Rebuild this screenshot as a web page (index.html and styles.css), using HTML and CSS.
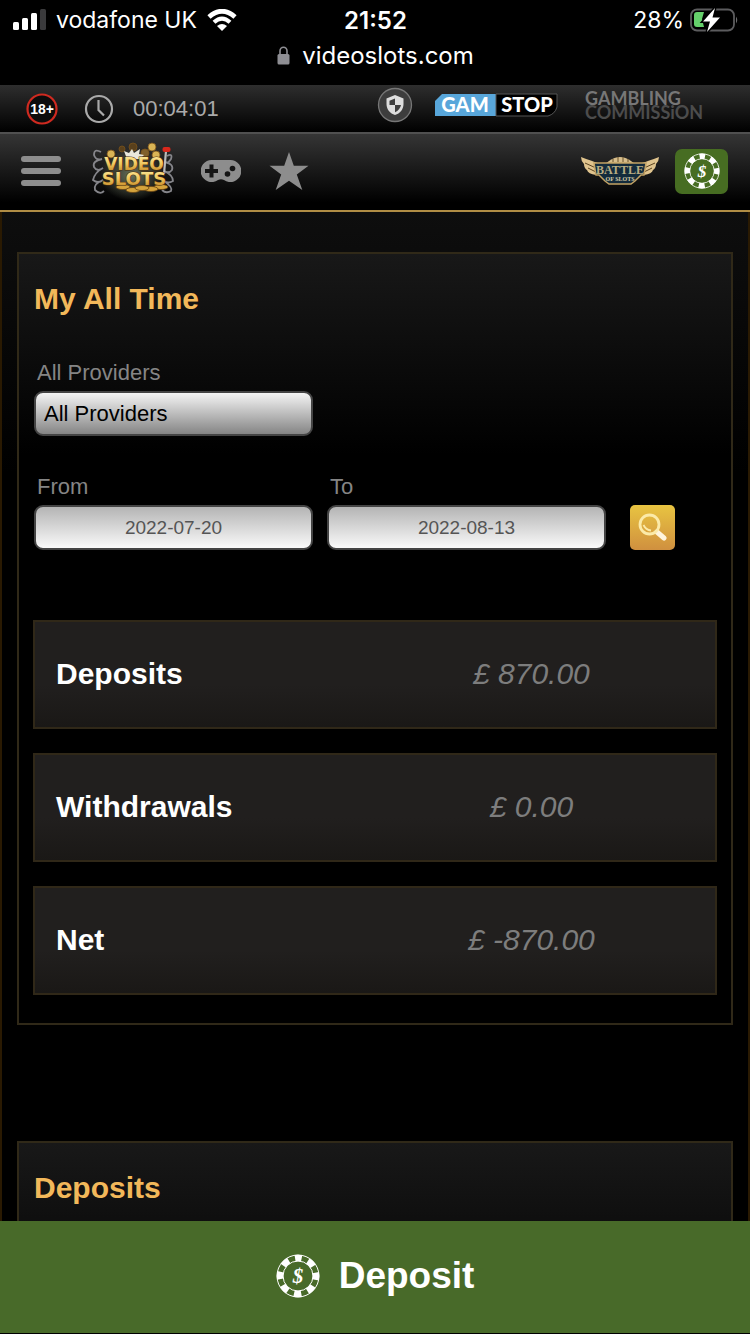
FILE: index.html
```html
<!DOCTYPE html>
<html lang="en">
<head>
	<meta charset="utf-8"/>
	<title>My All Time - videoslots.com</title>
	<meta name="viewport" content="width=device-width,initial-scale=1.0">
	<link rel="stylesheet" href="styles.css">
</head>

<body>
	<!-- shared poker chip -->
	<svg class="defs" aria-hidden="true">
		<symbol id="chip" viewBox="0 0 44 44">
			<circle cx="22" cy="22" r="21" fill="none" stroke="#fff" stroke-width="1"/>
			<circle cx="22" cy="22" r="18" fill="none" stroke="#fff" stroke-width="6.5" stroke-dasharray="7.5 6.637" stroke-dashoffset="3.75" transform="rotate(-90 22 22)"/>
			<circle cx="22" cy="22" r="15" fill="none" stroke="#fff" stroke-width="1"/>
			<text x="22" y="29" text-anchor="middle" class="chip-sign">$</text>
		</symbol>
	</svg>

	<div class="device">
		<div class="status">
			<div class="status-left">
				<svg width="33" height="22" viewBox="0 0 33 22">
					<rect x="0" y="13" width="6" height="8" rx="1.5" fill="#fff"/>
					<rect x="9" y="9" width="6" height="12" rx="1.5" fill="#fff"/>
					<rect x="18" y="4" width="6" height="17" rx="1.5" fill="#fff"/>
					<rect x="27" y="0" width="6" height="21" rx="1.5" fill="#3a3a3c"/>
				</svg>
				<span>vodafone UK</span>
				<svg width="30" height="22" viewBox="0 0 30 22">
					<path d="M2 8 Q15 -3.500 28 8" fill="none" stroke="#fff" stroke-width="4.800"/>
					<path d="M7 13.200 Q15 6 23 13.200" fill="none" stroke="#fff" stroke-width="4.200"/>
					<path d="M10 17 Q15 13 20 17 L15 22Z" fill="#fff"/>
				</svg>
			</div>
			<b class="status-time">21:52</b>
			<div class="status-right">
				<span>28%</span>
				<svg width="48" height="24" viewBox="0 0 48 24">
					<rect x="1" y="1.500" width="43" height="21" rx="6" fill="none" stroke="#5c5c5e" stroke-width="1.800"/>
					<path d="M46 8.500 q2.500 3.500 0 7z" fill="#6c6c6e"/>
					<path d="M7 4 H14 L12 11 L14 19 H7 Q4 19 4 16 V7 Q4 4 7 4Z" fill="#65d06b"/>
					<path d="M25 0 L13 13.500 H20 L17 24 L30 9.500 H22.500Z" fill="#fff" stroke="#000" stroke-width="3" paint-order="stroke"/>
				</svg>
			</div>
			<div class="status-url">
				<svg width="13" height="19" viewBox="0 0 13 19">
					<path d="M3 9 V5 a3.500 3.800 0 0 1 7 0 V9" fill="none" stroke="#8e8e93" stroke-width="1.600"/>
					<rect x="0.500" y="8" width="12" height="10.500" rx="1.500" fill="#8e8e93"/>
				</svg>
				<span>videoslots.com</span>
			</div>
		</div>

		<div class="info-bar">
			<svg class="age" width="32" height="32" viewBox="0 0 32 32">
				<circle cx="16" cy="16" r="14.500" fill="#0c0c0c" stroke="#cf2a20" stroke-width="2.200"/>
				<text x="16" y="21" text-anchor="middle" class="age-text">18+</text>
			</svg>
			<svg width="30" height="30" viewBox="0 0 30 30" fill="none" stroke="#aaa" stroke-width="2.200">
				<circle cx="15" cy="15" r="13"/>
				<path d="M14.500 6 V16 L20 21.500"/>
			</svg>
			<span class="session">00:04:01</span>
			<div class="badges">
				<svg width="36" height="36" viewBox="0 0 36 36">
					<circle cx="18" cy="18" r="16.500" fill="#3d3d3d" stroke="#777" stroke-width="1.300"/>
					<path d="M18 8 L26.500 11.500 V17 C26.500 22.500 23 26.500 18 28 C13 26.500 9.500 22.500 9.500 17 V11.500Z" fill="#ddd"/>
					<path d="M18 11.500 V18 H12.500 V13.800Z M18 18 H24 Q23 23 18 25.200Z" fill="#3d3d3d"/>
				</svg>
				<svg width="125" height="28" viewBox="0 0 125 28">
					<path d="M8 3 H62 V25 H1 V10Z" fill="#58a6da"/>
					<path d="M62 3 H123 V16 Q121 23 114 25 H62Z" fill="#000" stroke="#555" stroke-width="1"/>
					<text x="31" y="21" text-anchor="middle" class="gamstop">GAM</text>
					<text x="93" y="21" text-anchor="middle" class="gamstop">STOP</text>
				</svg>
				<div class="commission"><span>GAMBLING</span><span>COMMISSiON</span></div>
			</div>
		</div>

		<header class="header">
			<button class="icon-button" aria-label="Menu">
				<svg width="40" height="30" viewBox="0 0 40 30" fill="#8d8d8d">
					<rect width="40" height="6" rx="3"/>
					<rect y="12" width="40" height="6" rx="3"/>
					<rect y="24" width="40" height="6" rx="3"/>
				</svg>
			</button>
			<a class="logo" href="#" aria-label="Videoslots">
				<svg width="84" height="60" viewBox="0 0 84 60">
					<defs>
						<linearGradient id="gold" x1="0" y1="0" x2="0" y2="1">
							<stop offset="0" stop-color="#fff0a8"/>
							<stop offset=".5" stop-color="#efc65c"/>
							<stop offset="1" stop-color="#b87a1c"/>
						</linearGradient>
						<radialGradient id="glow">
							<stop offset="0" stop-color="#67705a"/>
							<stop offset="1" stop-color="#67705a" stop-opacity="0"/>
						</radialGradient>
					</defs>
					<ellipse cx="41" cy="34" rx="32" ry="26" fill="url(#glow)"/>
					<g fill="none" stroke="#85858a" stroke-width="1.800">
						<path d="M10 11 q-7 -4 -7 3 q2 6 8 4 q-10 2 -8 8 q3 5 9 1 q-8 4 -10 12 q5 4 10 0 q-10 4 -8 10 q5 5 9 1"/>
						<path d="M76 15 q6 -3 4 3 q-3 5 -6 3 q9 2 7 8 q-3 4 -8 1 q9 4 9 10 q-5 3 -9 0 q9 6 7 10 q-5 3 -9 -1"/>
					</g>
					<g stroke="#79521b" stroke-width=".8" fill="#d9b455">
						<circle cx="61" cy="6" r="4"/>
						<circle cx="20" cy="13" r="4"/>
						<circle cx="65" cy="14" r="4"/>
						<circle cx="31" cy="8" r="3" fill="#59401c"/>
						<circle cx="42" cy="6" r="4" fill="#59401c"/>
						<circle cx="54" cy="12" r="4" fill="#80602c"/>
					</g>
					<path d="M33 10 l5 2 3 -4 2 4 6 -4 -1 5 5 1 -4 4 h-13z" fill="#e9e7dc"/>
					<path d="M75 10 L73 33" stroke="#bbb" stroke-width="2.200"/>
					<rect x="71.500" y="6" width="8" height="5" rx="2" fill="#d9281c"/>
					<g fill="#d6a43c" stroke="#6a4513" stroke-width=".8">
						<ellipse cx="32" cy="46" rx="7" ry="2.500"/><ellipse cx="70" cy="46" rx="7" ry="2.500"/>
						<ellipse cx="42" cy="49" rx="7" ry="2.500"/><ellipse cx="60" cy="48" rx="7" ry="2.500"/>
						<ellipse cx="51" cy="47" rx="7" ry="2.500"/>
					</g>
					<text x="43" y="29" text-anchor="middle" class="logo-text logo-video">VIDEO</text>
					<text x="43" y="44" text-anchor="middle" class="logo-text logo-slots">SLOTS</text>
				</svg>
			</a>
			<button class="icon-button" aria-label="Games">
				<svg width="40" height="22" viewBox="0 0 40 22">
					<path d="M11 0 H29 A11 11 0 1 1 23 20 Q20 18.500 17 20 A11 11 0 1 1 11 0Z" fill="#8d8d8d"/>
					<path d="M10.500 4.500 V17.500 M4 11 H17" stroke="#151515" stroke-width="4"/>
					<circle cx="31.500" cy="8.500" r="2.800" fill="#151515"/>
					<circle cx="26.500" cy="14" r="2.800" fill="#151515"/>
				</svg>
			</button>
			<button class="icon-button" aria-label="Favourites">
				<svg width="40" height="40" viewBox="0 0 40 40">
					<path d="M20 1 L24.800 14.800 H39.500 L27.800 23.600 L33.300 39 L20 29.800 L6.700 39 L12.200 23.600 L.5 14.800 H15.200Z" fill="#8d8d8d"/>
				</svg>
			</button>
			<a class="battle" href="#" aria-label="Battle of Slots">
				<svg width="78" height="32" viewBox="0 0 78 32">
					<path d="M28 6 Q39 -2 50 6 L54 9 H24Z" fill="#d6bd8b"/>
					<path d="M32 4 v3 M37 2 v5 M42 2 v5 M47 4 v3" stroke="#6b532a"/>
					<path d="M0 2 Q11 6 17 8 L15 20 Q7 19 6 15 Q3 13 3 9Q0 6 0 2Z M78 2 Q67 6 61 8 L63 20 Q71 19 72 15 Q75 13 75 9Q78 6 78 2Z" fill="#e0c48e"/>
					<path d="M4 8 L15 13 M7 13 L15 17 M74 8 L63 13 M71 13 L63 17" stroke="#5b4320"/>
					<path d="M13 8 H65 L63 20 H60 L54 26 L50 29 H28 L24 26 L18 20 H15Z" fill="#132b3c" stroke="#c2a264" stroke-width="1.500"/>
					<text x="39" y="19" text-anchor="middle" class="battle-text">BATTLE</text>
					<text x="39" y="26" text-anchor="middle" class="battle-small">OF SLOTS</text>
				</svg>
			</a>
			<button class="chip-button" aria-label="Quick deposit">
				<svg width="36" height="36"><use href="#chip"/></svg>
			</button>
		</header>

		<main class="content">
			<section class="panel">
				<h2>My All Time</h2>
				<form class="filters">
					<div class="field">
						<label for="provider">All Providers</label>
						<select id="provider">
							<option>All Providers</option>
						</select>
					</div>
					<div class="dates">
						<div class="field">
							<label for="from">From</label>
							<input type="text" id="from" value="2022-07-20"/>
						</div>
						<div class="field">
							<label for="to">To</label>
							<input type="text" id="to" value="2022-08-13"/>
						</div>
						<button type="button" class="search" aria-label="Search">
							<svg width="29" height="29" viewBox="0 0 29 29" fill="none">
								<path d="M19 19 L26 25" stroke="#fff4dc" stroke-width="5" stroke-linecap="round"/>
								<circle cx="11.500" cy="11.500" r="9.500" stroke="#fbeaa8" stroke-width="2.800"/>
								<path d="M5.500 12 Q8 17 13 17.500" stroke="#fbeaa8" stroke-width="1.800"/>
							</svg>
						</button>
					</div>
				</form>
				<dl class="totals">
					<div><dt>Deposits</dt><dd>£ 870.00</dd></div>
					<div><dt>Withdrawals</dt><dd>£ 0.00</dd></div>
					<div><dt>Net</dt><dd>£ -870.00</dd></div>
				</dl>
			</section>
			<section class="panel">
				<h2>Deposits</h2>
			</section>
		</main>

		<button class="deposit">
			<svg width="44" height="44"><use href="#chip"/></svg>
			Deposit
		</button>
	</div>
</body>
</html>
```
FILE: styles.css
```css
* {
	box-sizing: border-box;
}
body {
	margin: 0;
	background: #000;
	color: #fff;
	font-family: "Liberation Sans", Arial, sans-serif;
	font-size: 22px;
}
button {
	padding: 0;
	border: 0;
	background: none;
	color: inherit;
	font-family: inherit;
}
svg {
	display: block;
	flex: none;
}
.defs {
	display: none;
}
.device {
	display: flex;
	flex-direction: column;
	height: 100vh;
	padding-bottom: 1px;
	overflow: hidden;
}

/* phone status */
.status {
	display: grid;
	grid-template-columns: 1fr auto 1fr;
	grid-template-rows: 40px 30px;
	align-items: center;
	flex: none;
	height: 85px;
	padding: 0 12px 0 13px;
	font-family: Inter, Roboto, sans-serif;
	font-size: 23px;
}
.status-left,
.status-right {
	display: flex;
	align-items: center;
	gap: 10px;
}
.status-right {
	justify-content: flex-end;
	gap: 6px;
}
.status-time {
	font-size: 24px;
	font-weight: 600;
}
.status-url {
	grid-column: 1 / 4;
	display: flex;
	justify-content: center;
	align-items: center;
	gap: 12px;
	font-size: 24px;
}

/* top bars */
.info-bar {
	display: flex;
	align-items: center;
	flex: none;
	height: 47px;
	padding: 0 44px 0 26px;
	background: linear-gradient(#2e2e2e, #000);
}
.age {
	margin-right: 26px;
}
.age-text {
	font-size: 14px;
	font-weight: bold;
	fill: #fff;
}
.session {
	margin-left: 19px;
	color: #aaa;
}
.badges {
	display: flex;
	align-items: center;
	margin-left: auto;
	padding-bottom: 8px;
}
.badges svg + svg {
	margin-left: 21px;
}
.gamstop {
	font-family: Lato, sans-serif;
	font-size: 20px;
	font-weight: 900;
	fill: #fff;
}
.commission {
	display: flex;
	flex-direction: column;
	width: 121px;
	margin-left: 26px;
	font-family: Lato, sans-serif;
	font-size: 18px;
	font-weight: bold;
	line-height: 14px;
	color: #777;
}
.commission span + span {
	color: #4c4c4c;
}
.header {
	display: flex;
	align-items: center;
	flex: none;
	height: 80px;
	padding: 0 22px 2px 21px;
	border-top: 2px solid #505050;
	border-bottom: 2px solid #b08d45;
	background: linear-gradient(#353535, #000 90%);
}
.logo {
	margin: 0 26px 0 30px;
}
.logo-text {
	font-family: "DejaVu Sans", sans-serif;
	font-weight: bold;
	fill: url(#gold);
	stroke: #4a2c08;
	stroke-width: 1px;
	paint-order: stroke;
}
.logo-video {
	font-size: 17px;
}
.logo-slots {
	font-size: 18px;
}
.icon-button + .icon-button {
	margin-left: 28px;
}
.battle {
	margin: 0 16px 0 auto;
}
.battle-text {
	font-family: "Liberation Serif", serif;
	font-size: 12px;
	font-weight: bold;
	fill: #b8ad82;
}
.battle-small {
	font-family: "Liberation Serif", serif;
	font-size: 6px;
	font-weight: bold;
	fill: #d6cba6;
}
.chip-button {
	display: flex;
	justify-content: center;
	align-items: center;
	width: 53px;
	height: 45px;
	border-radius: 7px;
	background: #476d22;
}
.chip-sign {
	font-family: "Liberation Serif", serif;
	font-size: 21px;
	font-style: italic;
	font-weight: bold;
	fill: #fff;
}

/* page */
.content {
	flex: 1;
	min-height: 0;
	overflow: hidden;
	padding: 40px 15px 0;
	border: solid #2a1a02;
	border-width: 0 2px;
	background: linear-gradient(#0e0e0e, #000 260px);
}
.panel {
	padding: 28px 14px;
	border: 2px solid #302918;
	background: linear-gradient(#181818, #000 200px);
}
.panel + .panel {
	margin-top: 116px;
}
h2 {
	margin: 0;
	padding-left: 1px;
	color: #f2b85a;
	font-size: 30px;
	line-height: 34px;
}
.filters {
	margin: 43px 0 70px 1px;
}
.field {
	flex: 0 1 279px;
	max-width: 279px;
}
.field label {
	display: block;
	margin: 0 0 4px 3px;
	color: #858585;
	line-height: 28px;
}
.field input,
.field select {
	display: block;
	width: 100%;
	height: 45px;
	padding: 0 8px;
	border: 2px solid #444;
	border-radius: 9px;
	font-family: inherit;
}
.field select {
	appearance: none;
	background: linear-gradient(#f4f4f4, #858585);
	color: #000;
	font-size: 22px;
}
.field input {
	background: linear-gradient(#b4b4b4, #fafafa);
	color: #555;
	font-size: 19px;
	text-align: center;
}
.dates {
	display: flex;
	align-items: flex-end;
	gap: 14px;
	margin-top: 37px;
}
.search {
	display: flex;
	justify-content: center;
	align-items: center;
	flex: none;
	width: 45px;
	height: 45px;
	margin-left: 10px;
	border-radius: 5px;
	background: linear-gradient(#e8c441, #d0903f);
}
.totals {
	display: grid;
	gap: 24px;
	margin: 0;
	font-size: 30px;
}
.totals div {
	display: grid;
	grid-template-columns: 46% 54%;
	align-items: center;
	height: 109px;
	padding-bottom: 2px;
	border: 2px solid #302818;
	background: linear-gradient(#211f1e 60%, #1a1816);
}
.totals dt {
	padding-left: 21px;
	font-weight: bold;
}
.totals dd {
	margin: 0;
	color: #7d7d7d;
	font-style: italic;
	text-align: center;
}
.deposit {
	display: flex;
	justify-content: center;
	align-items: center;
	gap: 19px;
	flex: none;
	height: 112px;
	padding-bottom: 2px;
	background: #486a29;
	font-size: 37px;
	font-weight: bold;
}
```
